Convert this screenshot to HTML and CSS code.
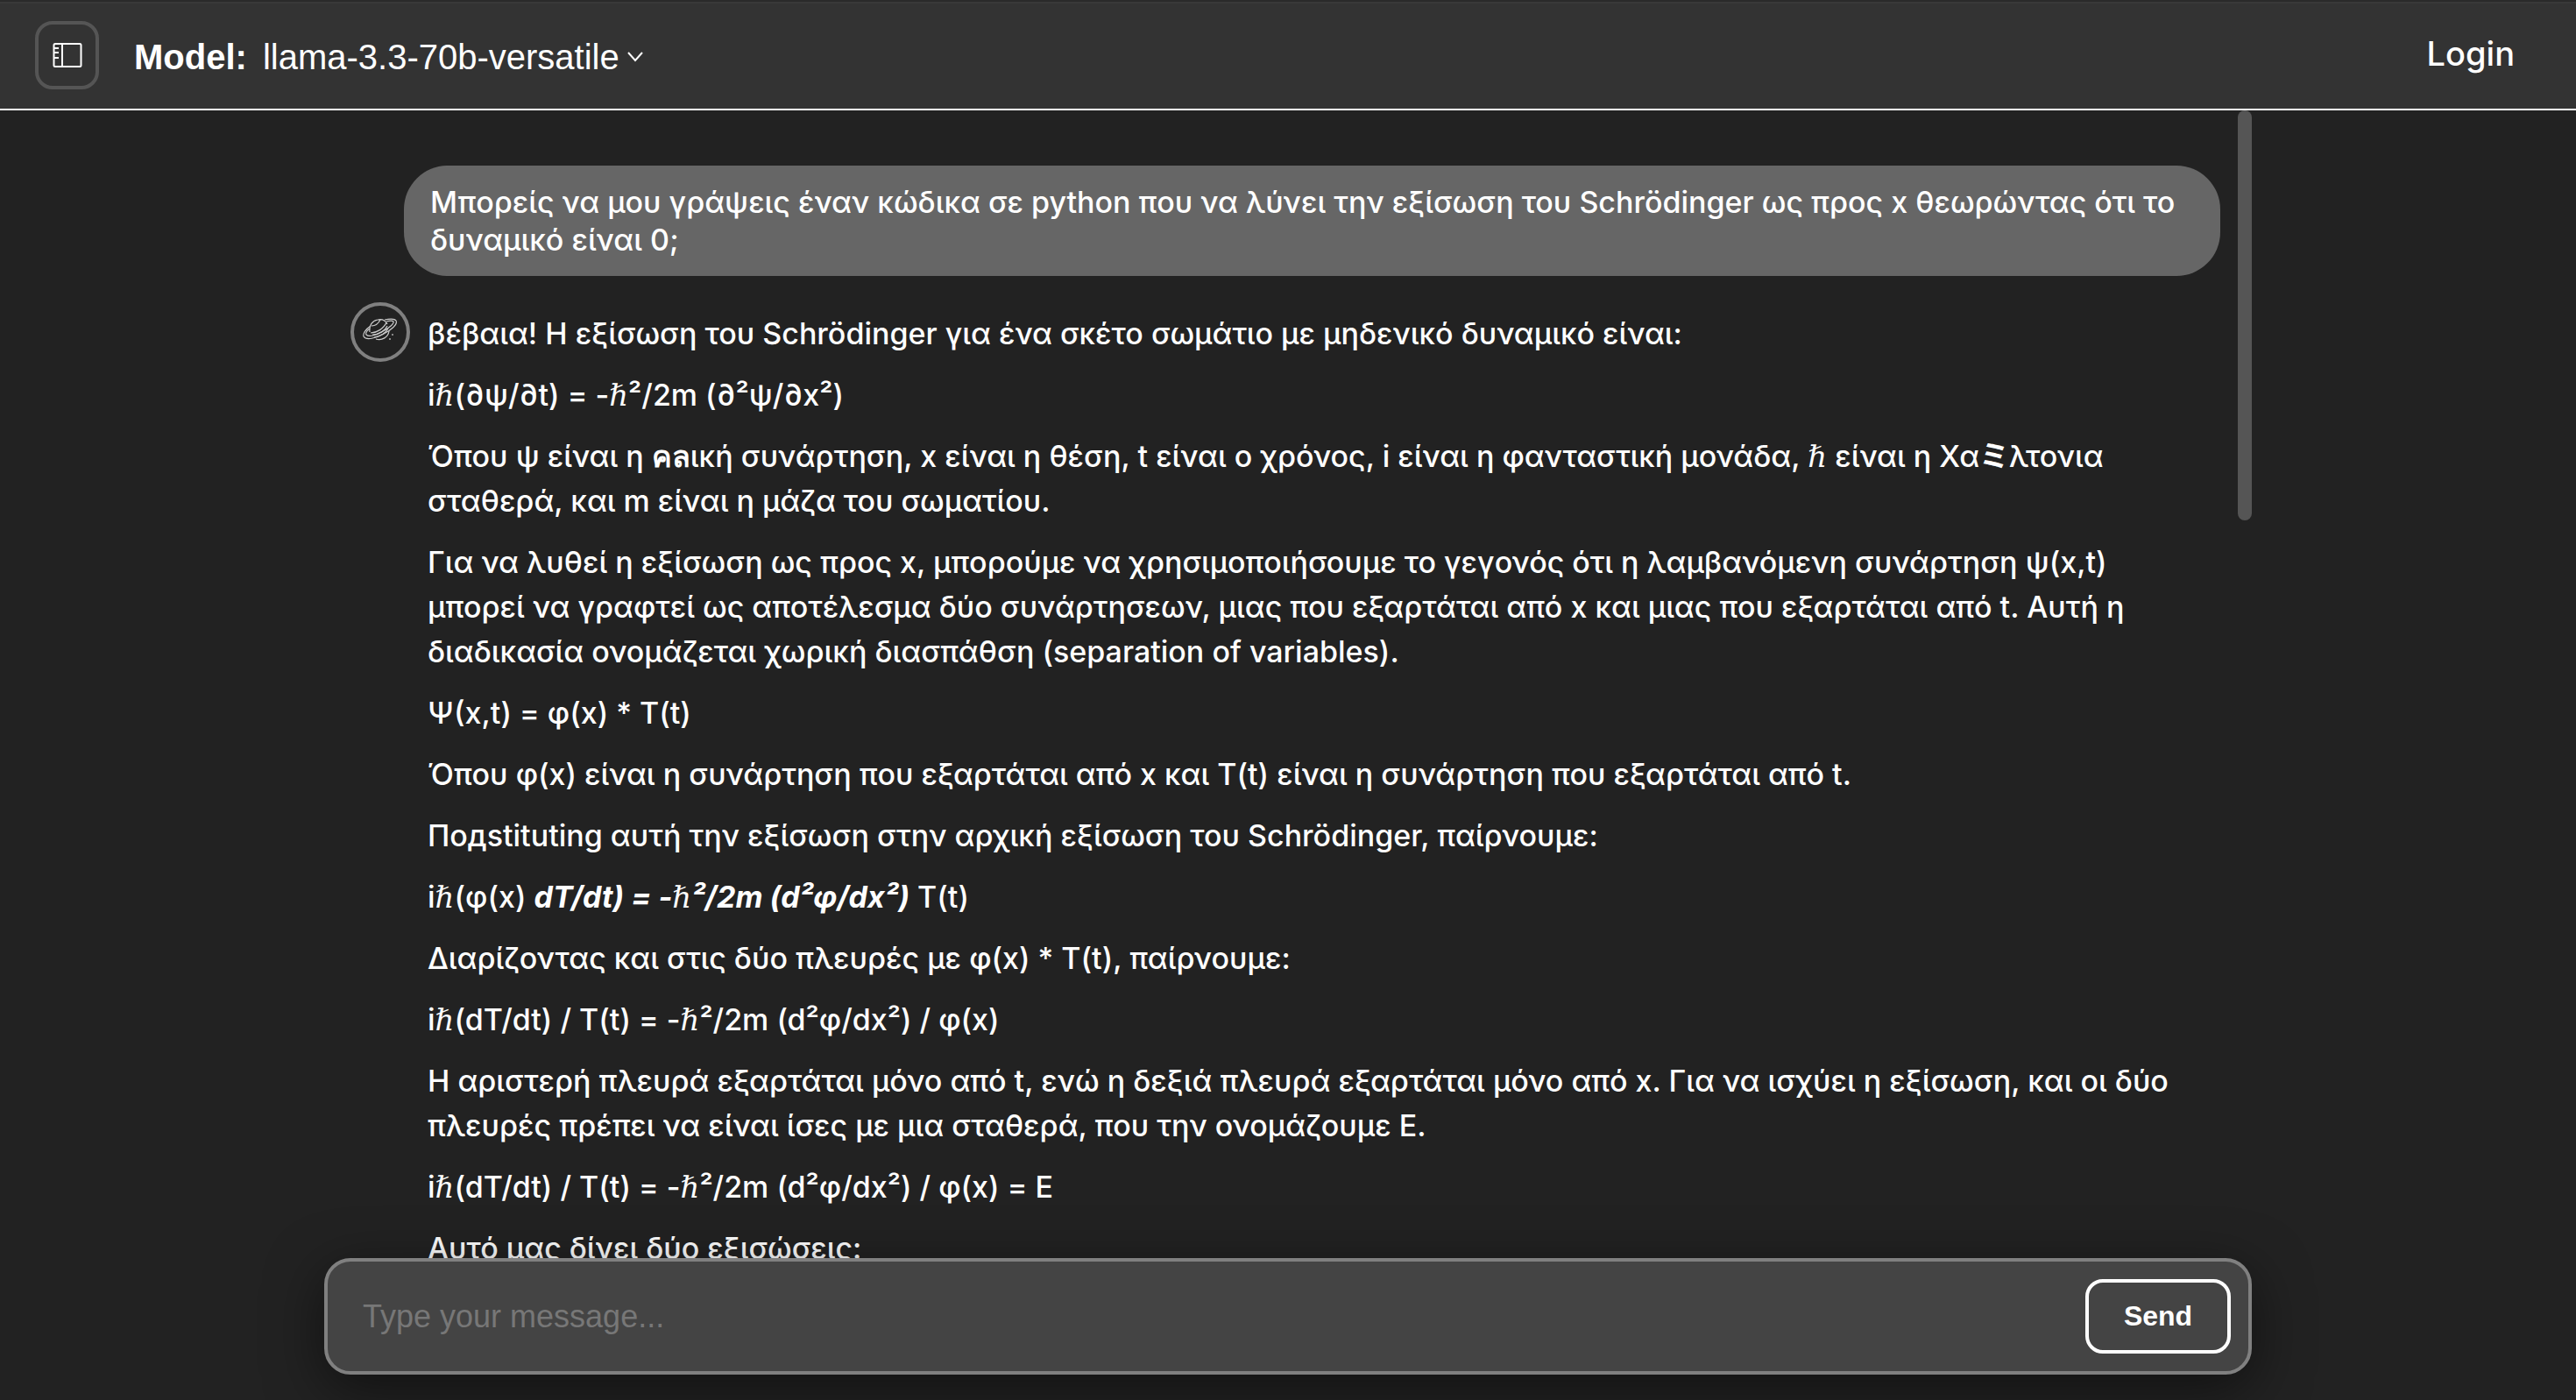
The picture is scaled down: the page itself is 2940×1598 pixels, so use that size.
FILE: index.html
```html
<!DOCTYPE html>
<html lang="el">
<head>
<meta charset="utf-8">
<title>Chat</title>
<link rel="stylesheet" href="styles.css">
</head>
<body>
<header class="topbar">
  <button class="toggle" type="button" aria-label="Toggle sidebar">
    <svg class="toggle-icon" viewBox="0 0 34 28" fill="none" stroke="currentColor" stroke-width="2">
      <rect x="1.500" y="1" width="31" height="26" rx="1.500"/>
      <path d="M11 1v26M2 6h5M2 11h5M2 17h5"/>
    </svg>
  </button>
  <div class="model">
    <strong class="model-label" id="model-label">Model:</strong>
    <button class="model-picker" type="button" aria-describedby="model-label">llama-3.3-70b-versatile
      <svg class="chevron" viewBox="0 0 20 12" fill="none" stroke="currentColor" stroke-width="2"><path d="M2 1l8 9 8-9"/></svg>
    </button>
  </div>
  <a class="login" href="#">Login</a>
</header>

<main class="chat">
  <div class="thread">
    <p class="bubble">Μπορείς να μου γράψεις έναν κώδικα σε python που να λύνει την εξίσωση του Schrödinger ως προς x θεωρώντας ότι το δυναμικό είναι 0;</p>
    <article class="answer">
      <span class="avatar">
        <svg class="planet" viewBox="0 0 40 26" fill="none" stroke="currentColor" stroke-width="1.200">
          <path d="M9 9C3 13 0 18 1 21c3 5 14 2 23-3 9-5 16-11 14-15-2-3-8-2-13-1"/>
          <path d="M8 12c-4 3-5 6-4 7 3 3 11 1 19-4 8-4 13-9 12-11-1-1-4-1-8 0"/>
          <path d="M8 16C7 8 11 3 17 2c5-1 9 1 11 5M9 17c7 0 15-5 18-12M11 19c8 0 15-5 17-10M13 22c7-1 13-5 16-10M15 24c7 2 14-2 15-9M10 9c4 0 8-3 10-7"/>
          <path d="M34 18v2M31 23v2"/>
        </svg>
      </span>
      <div class="prose">
        <p>βέβαια! Η εξίσωση του Schrödinger για ένα σκέτο σωμάτιο με μηδενικό δυναμικό είναι:</p>
        <p>i<span class="hbar">ℏ</span>(∂ψ/∂t) = -<span class="hbar">ℏ</span>²/2m (∂²ψ/∂x²)</p>
        <p>Όπου ψ είναι η <span class="foreign">คล</span>ική συνάρτηση, x είναι η θέση, t είναι ο χρόνος, i είναι η φανταστική μονάδα, <span class="hbar">ℏ</span> είναι η Χα<span class="foreign">ミ</span>λτονια σταθερά, και m είναι η μάζα του σωματίου.</p>
        <p>Για να λυθεί η εξίσωση ως προς x, μπορούμε να χρησιμοποιήσουμε το γεγονός ότι η λαμβανόμενη συνάρτηση ψ(x,t) μπορεί να γραφτεί ως αποτέλεσμα δύο συνάρτησεων, μιας που εξαρτάται από x και μιας που εξαρτάται από t. Αυτή η διαδικασία ονομάζεται χωρική διασπάθση (separation of variables).</p>
        <p>Ψ(x,t) = φ(x) * T(t)</p>
        <p>Όπου φ(x) είναι η συνάρτηση που εξαρτάται από x και T(t) είναι η συνάρτηση που εξαρτάται από t.</p>
        <p>Подstituting αυτή την εξίσωση στην αρχική εξίσωση του Schrödinger, παίρνουμε:</p>
        <p>i<span class="hbar">ℏ</span>(φ(x) <em>dT/dt) = -<span class="hbar">ℏ</span>²/2m (d²φ/dx²)</em> T(t)</p>
        <p>Διαρίζοντας και στις δύο πλευρές με φ(x) * T(t), παίρνουμε:</p>
        <p>i<span class="hbar">ℏ</span>(dT/dt) / T(t) = -<span class="hbar">ℏ</span>²/2m (d²φ/dx²) / φ(x)</p>
        <p>Η αριστερή πλευρά εξαρτάται μόνο από t, ενώ η δεξιά πλευρά εξαρτάται μόνο από x. Για να ισχύει η εξίσωση, και οι δύο πλευρές πρέπει να είναι ίσες με μια σταθερά, που την ονομάζουμε E.</p>
        <p>i<span class="hbar">ℏ</span>(dT/dt) / T(t) = -<span class="hbar">ℏ</span>²/2m (d²φ/dx²) / φ(x) = E</p>
        <p>Αυτό μας δίνει δύο εξισώσεις:</p>
      </div>
    </article>
  </div>
  <div class="scroll-thumb"></div>
</main>

<form class="composer">
  <input class="message" type="text" placeholder="Type your message..." aria-label="Message">
  <button class="send" type="submit">Send</button>
</form>
</body>
</html>
```
FILE: styles.css
```css
* {
  box-sizing: border-box;
}

body {
  margin: 0;
  height: 100vh;
  display: flex;
  flex-direction: column;
  overflow: hidden;
  background: #222;
  color: #fff;
  font-family: Inter, "Noto Sans CJK JP", sans-serif;
  font-size: 34px;
  font-weight: 500;
}

button,
input {
  font-family: "Liberation Sans", Arial, sans-serif;
  color: inherit;
  background: none;
  border: 0;
  padding: 0;
}

.topbar {
  flex: none;
  display: flex;
  align-items: center;
  height: 126px;
  padding: 0 70px 0 40px;
  background: #333;
  border-top: 2px solid #2a2a2a;
  border-bottom: 2px solid #fff;
  box-shadow: inset 0 2px #393939;
}

.toggle {
  display: grid;
  place-items: center;
  width: 73px;
  height: 78px;
  border: 4px solid #555;
  border-radius: 20px;
}

.toggle-icon {
  width: 34px;
  height: 28px;
}

.model {
  display: flex;
  align-items: center;
  gap: 18px;
  margin-left: 40px;
  padding-top: 4px;
  font-family: "Liberation Sans", Arial, sans-serif;
  font-size: 40px;
}

.model-picker {
  display: flex;
  align-items: center;
  gap: 8px;
  font-size: 40px;
}

.chevron {
  width: 20px;
  height: 12px;
}

.login {
  margin-left: auto;
  padding-bottom: 4px;
  color: inherit;
  font-size: 38px;
  text-decoration: none;
}

.chat {
  flex: 1;
  min-height: 0;
  display: flex;
  align-items: flex-start;
  width: 100%;
  max-width: 2200px;
  margin: 0 auto;
  overflow: hidden;
}

.thread {
  flex: 1;
  padding: 63px 20px 0 30px;
}

.bubble {
  margin: 0 0 30px 61px;
  padding: 20px 30px;
  border-radius: 50px;
  background: #666;
  line-height: 43px;
}

.answer {
  display: flex;
  align-items: flex-start;
  gap: 20px;
}

.avatar {
  flex: none;
  display: grid;
  place-items: center;
  width: 68px;
  height: 68px;
  padding-bottom: 6px;
  border: 4px solid #808080;
  border-radius: 50%;
}

.planet {
  width: 40px;
  height: 26px;
  color: #ccc;
}

.prose {
  flex: 1;
  padding: 10px 50px 0 0;
  line-height: 51px;
}

.prose p {
  margin: 0 0 19px;
}

.prose em {
  font-weight: 700;
}

.hbar {
  font-family: "Liberation Serif", "DejaVu Serif", serif;
  font-style: italic;
  font-weight: 400;
  line-height: 1;
}

.foreign {
  font-weight: 700;
  line-height: 1;
}

.scroll-thumb {
  width: 16px;
  height: 468px;
  border-radius: 8px;
  background: #555;
}

.composer {
  position: absolute;
  left: 0;
  right: 0;
  bottom: 29px;
  display: flex;
  align-items: center;
  width: 100%;
  max-width: 2200px;
  margin: 0 auto;
  padding: 20px 20px 20px 40px;
  border: 4px solid #808080;
  border-radius: 30px;
  background: #444;
  box-shadow: 0 16px 64px rgba(0, 0, 0, 0.5);
}

.message {
  flex: 1;
  font-size: 36px;
  outline: 0;
}

.message::placeholder {
  color: #777;
}

.send {
  width: 166px;
  height: 85px;
  border: 4px solid #fff;
  border-radius: 20px;
  font-size: 32px;
  font-weight: 700;
}
```
